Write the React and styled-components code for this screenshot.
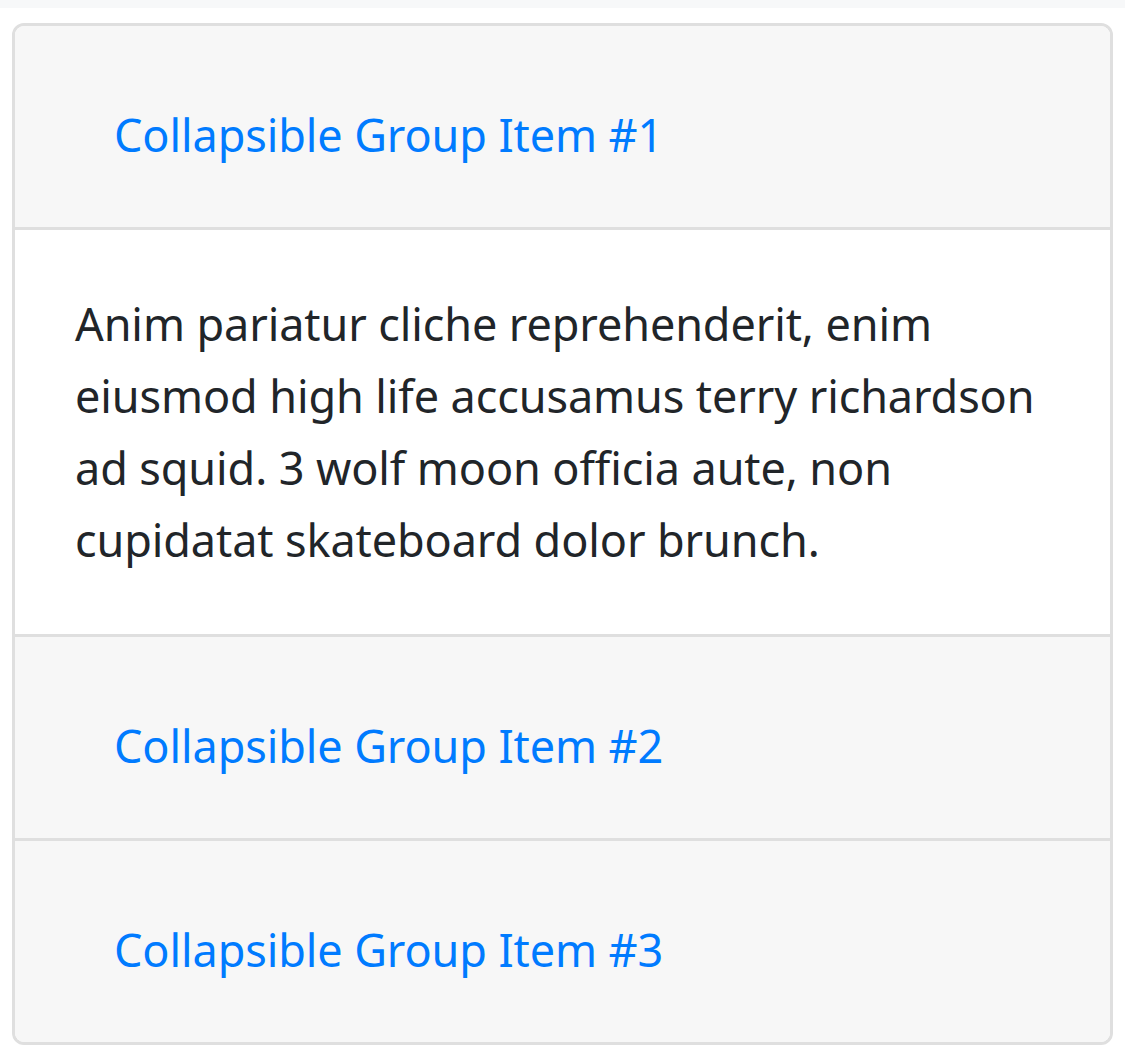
import React from "react";
import styled, { createGlobalStyle } from "styled-components";

const GlobalStyle = createGlobalStyle`
  body {
    margin: 0;
    background: #fff;
    font-family: "Noto Sans", "Open Sans", sans-serif;
    color: #212529;
  }
`;

const TopStrip = styled.div`
  height: 8px;
  background: #f7f8f9;
`;

const Page = styled.div`
  padding: 15px 12px 12px 12px;
`;

const Accordion = styled.div`
  border: 3px solid #dfdfdf;
  border-radius: 12px;
  overflow: hidden;
`;

const CardHeader = styled.div`
  background: #f7f7f7;
  padding: 52px 60px 35px;
  border-top: ${(p) => (p.$first ? "none" : "3px solid #dfdfdf")};
`;

const ToggleButton = styled.button`
  display: inline-block;
  font-family: inherit;
  font-size: 45px;
  line-height: 72px;
  letter-spacing: -0.1px;
  padding: 18px 36px;
  border: 3px solid transparent;
  background: transparent;
  color: #007bff;
  cursor: pointer;
  text-align: left;
`;

const CardBody = styled.div`
  border-top: 3px solid #dfdfdf;
  padding: 58px 60px;
  font-size: 45px;
  line-height: 72px;
  letter-spacing: -0.1px;
  color: #212529;
`;

const items = [
  {
    title: "Collapsible Group Item #1",
    body: "Anim pariatur cliche reprehenderit, enim eiusmod high life accusamus terry richardson ad squid. 3 wolf moon officia aute, non cupidatat skateboard dolor brunch.",
    open: true,
  },
  { title: "Collapsible Group Item #2", open: false },
  { title: "Collapsible Group Item #3", open: false },
];

export default function App() {
  return (
    <>
      <GlobalStyle />
      <TopStrip />
      <Page>
        <Accordion>
          {items.map((item, i) => (
            <div key={item.title}>
              <CardHeader $first={i === 0}>
                <ToggleButton>{item.title}</ToggleButton>
              </CardHeader>
              {item.open && <CardBody>{item.body}</CardBody>}
            </div>
          ))}
        </Accordion>
      </Page>
    </>
  );
}
